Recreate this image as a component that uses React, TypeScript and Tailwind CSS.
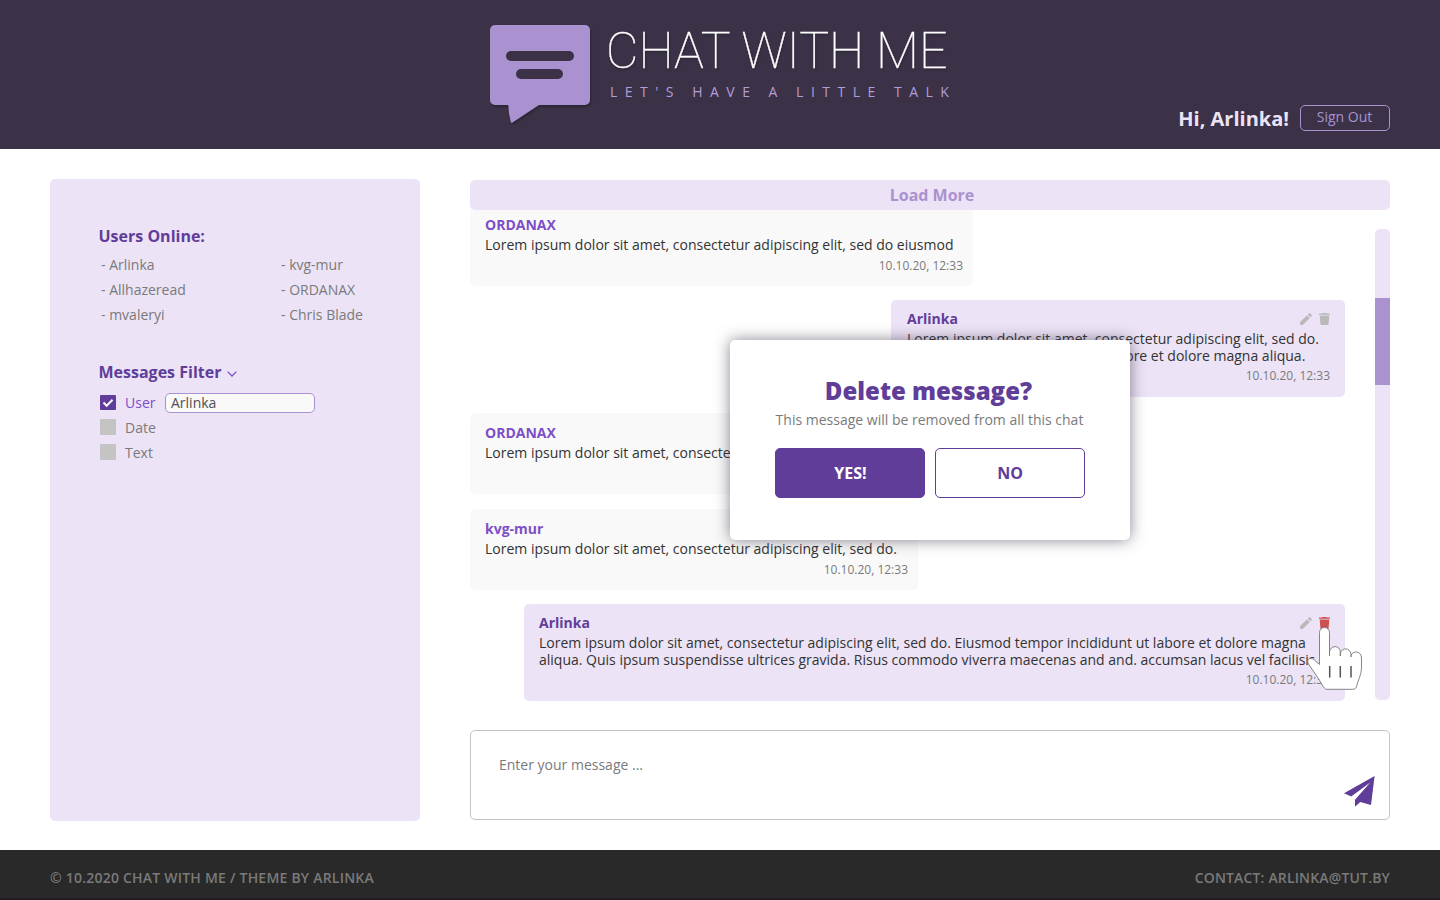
import React from "react";

function PencilIcon() {
  return (
    <svg className="h-3 w-3" viewBox="0 0 12 12" fill="#b9b9b9">
      <path d="M0 9.300V12h2.700L9.800 4.900 7.100 2.200zM11.700 2.900a.9.9 0 0 0 0-1L10.200.3a.9.9 0 0 0-1 0L7.800 1.600l2.600 2.600z" />
    </svg>
  );
}

function TrashIcon({ active }: { active?: boolean }) {
  return (
    <svg className="h-3 w-[11px]" viewBox="0 0 11 12" fill={active ? "#cb5050" : "#b9b9b9"}>
      <path d="M0 .6h3L3.5 0h4l.5.6h3v1.2H0zM.7 2.6h9.6L9.6 11a1 1 0 0 1-1 1H2.400a1 1 0 0 1-1-1z" />
    </svg>
  );
}

type MessageProps = {
  author: string;
  lines: string[];
  time?: string;
  own?: boolean;
  active?: boolean;
  className: string;
};

function Message({ author, lines, time, own, active, className }: MessageProps) {
  return (
    <article
      className={`flex shrink-0 flex-col rounded-[5px] ${
        own ? "self-end bg-[#ece3f6] pt-[10px] pr-[15px]" : "bg-[#f9f9f9] pt-[11px] pr-[10px]"
      } ${className}`}
    >
      <div className="flex h-5 items-start justify-between">
        <h3 className={`text-[14px] leading-[17px] font-bold ${own ? "text-[#613d9a]" : "text-[#7d4fc9]"}`}>
          {author}
        </h3>
        {own && (
          <div className="flex gap-[7px] pt-[3px]">
            <PencilIcon />
            <TrashIcon active={active} />
          </div>
        )}
      </div>
      <div className="text-[14px] leading-[17px] whitespace-nowrap text-[#333]">
        {lines.map((l) => (
          <p key={l}>{l}</p>
        ))}
      </div>
      {time && (
        <time className={`self-end text-[12px] leading-[17px] text-[#7a7a7a] ${own ? "mt-[3px]" : "mt-[4px]"}`}>
          {time}
        </time>
      )}
    </article>
  );
}

const users = ["Arlinka", "kvg-mur", "Allhazeread", "ORDANAX", "mvaleryi", "Chris Blade"];

export default function App() {
  return (
    <div className="relative flex h-[900px] w-[1440px] flex-col overflow-hidden bg-white font-['Open_Sans',sans-serif]">
      <header className="flex h-[149px] shrink-0 bg-[#3b3247] pr-[50px] pl-[490px]">
        <svg
          className="mt-[25px] h-[102px] w-[104px] shrink-0 overflow-visible drop-shadow-[1px_2px_1px_rgba(0,0,0,0.25)]"
          viewBox="0 0 104 102"
        >
          <path
            d="M5 0h90a5 5 0 0 1 5 5v70a5 5 0 0 1-5 5H49L22.500 97.600q-1.500 .8-1.800-.8Q18.500 88 18.300 80H5a5 5 0 0 1-5-5V5a5 5 0 0 1 5-5z"
            fill="#aa91d0"
          />
          <rect x="16" y="26" width="68" height="10" rx="5" fill="#3b3247" />
          <rect x="26" y="44" width="47" height="10" rx="5" fill="#3b3247" />
        </svg>
        <div className="flex w-[400px] shrink-0 flex-col pt-[21px] pl-[12px] whitespace-nowrap">
          <h1 className="font-['Roboto',sans-serif] text-[50px] leading-[60px] font-thin text-white [text-shadow:1px_2px_2px_rgba(0,0,0,0.25)] [-webkit-text-stroke:0.35px_white]">
            CHAT WITH ME
          </h1>
          <p className="-mt-px pl-[4px] text-[14px] leading-[24px] tracking-[7.500px] text-[#b49cd8]">
            LET'S HAVE A LITTLE TALK
          </p>
        </div>
        <div className="flex flex-1 items-start justify-end gap-[11px] pt-[105px]">
          <span className="text-[20px] leading-[27px] font-bold whitespace-nowrap text-[#ece3f6]">Hi, Arlinka!</span>
          <button className="flex h-[26px] w-[90px] shrink-0 justify-center rounded-[5px] border border-[#aa91d0] pr-px text-[14px] leading-[22px] text-[#aa91d0]">
            Sign Out
          </button>
        </div>
      </header>

      <main className="flex h-[701px] shrink-0 gap-[50px] px-[50px]">
        <aside className="mt-[30px] h-[642px] w-[370px] shrink-0 rounded-[5px] bg-[#ece3f6] pt-[46px] pl-[48px] text-[14px] text-[#7a7a7a]">
          <h2 className="pl-[0.5px] text-[16px] leading-[22px] font-bold text-[#613d9a]">Users Online:</h2>
          <ul className="mt-[5px] grid grid-cols-[180px_1fr] pl-[3px] leading-[25px]">
            {users.map((u) => (
              <li key={u}>- {u}</li>
            ))}
          </ul>
          <h2 className="mt-[34px] flex items-center gap-[6px] pl-[0.5px] text-[16px] leading-[22px] font-bold text-[#613d9a]">
            Messages Filter
            <svg className="mt-[3px] h-[6px] w-[10px]" viewBox="0 0 10 6" fill="none" stroke="#7d4fc9" strokeWidth="1.3">
              <path d="M.6 .6 5 5 9.400 .6" />
            </svg>
          </h2>
          <div className="mt-[7px] pl-[2px] leading-[25px]">
            <div className="flex h-[25px] items-center">
              <svg className="h-[15px] w-4" viewBox="0 0 16 15">
                <rect width="16" height="15" rx="1" fill="#613d9a" />
                <path d="M3.500 7.500 6.700 10.700 12.500 4.700" fill="none" stroke="#f9f9f9" strokeWidth="2" />
              </svg>
              <span className="ml-[9px] w-[40px] text-[#7d4fc9]">User</span>
              <div className="h-5 w-[150px] rounded-[5px] border border-[#aa91d0] bg-[#f9f9f9] pl-[5px] leading-[18px] text-[#4f4f4f]">
                Arlinka
              </div>
            </div>
            {["Date", "Text"].map((f) => (
              <div key={f} className="flex h-[25px] items-center gap-[9px]">
                <span className="-mt-px h-4 w-4 rounded-[1px] bg-[#c4c4c4]" />
                {f}
              </div>
            ))}
          </div>
        </aside>

        <section className="flex w-[920px] flex-col pt-[31px]">
          <button className="h-[30px] shrink-0 rounded-[5px] bg-[#ece3f6] pl-[4px] text-[16px] leading-[30px] font-bold text-[#aa91d0]">
            Load More
          </button>
          <div className="flex h-[491px] shrink-0 gap-[30px]">
            <div className="flex w-[875px] flex-col overflow-hidden">
              <Message
                author="ORDANAX"
                lines={["Lorem ipsum dolor sit amet, consectetur adipiscing elit, sed do eiusmod"]}
                time="10.10.20, 12:33"
                className="-mt-[5px] h-[81px] w-[503px] pl-[15px]"
              />
              <Message
                own
                author="Arlinka"
                lines={[
                  "Lorem ipsum dolor sit amet, consectetur adipiscing elit, sed do.",
                  "Eiusmod tempor incididunt ut labore et dolore magna aliqua.",
                ]}
                time="10.10.20, 12:33"
                className="mt-[14px] h-[97px] w-[454px] pl-[16px]"
              />
              <Message
                author="ORDANAX"
                lines={["Lorem ipsum dolor sit amet, consectetur"]}
                className="mt-[16px] h-[81px] w-[380px] pl-[15px]"
              />
              <Message
                author="kvg-mur"
                lines={["Lorem ipsum dolor sit amet, consectetur adipiscing elit, sed do."]}
                time="10.10.20, 12:33"
                className="mt-[15px] h-[81px] w-[448px] pl-[15px]"
              />
              <Message
                own
                active
                author="Arlinka"
                lines={[
                  "Lorem ipsum dolor sit amet, consectetur adipiscing elit, sed do. Eiusmod tempor incididunt ut labore et dolore magna",
                  "aliqua. Quis ipsum suspendisse ultrices gravida. Risus commodo viverra maecenas and and. accumsan lacus vel facilisis.",
                ]}
                time="10.10.20, 12:33"
                className="mt-[14px] h-[97px] w-[821px] pl-[15px]"
              />
            </div>
            <div className="mt-[19px] h-[471px] w-[15px] rounded-[5px] bg-[#ece3f6] pt-[69px]">
              <div className="h-[87px] bg-[#aa91d0]" />
            </div>
          </div>
          <div className="mt-[29px] flex h-[90px] shrink-0 justify-between rounded-[5px] border border-[#c4c4c4] pr-[14px] pl-[28px]">
            <p className="mt-[22px] text-[14px] leading-[24px] text-[#7a7a7a]">Enter your message ...</p>
            <svg className="mt-[45px] h-[31px] w-[31px]" viewBox="0 0 31 31" fill="#613d9a">
              <path d="M30.600 0 0 17.200 7.200 20.600 26.200 6.400 11 23.800V30.700L16.300 26 27 29z" />
            </svg>
          </div>
        </section>
      </main>

      <footer className="flex h-[50px] shrink-0 justify-between border-b-2 border-[#241c22] bg-[#292929] px-[50px] pt-[16px] text-[14px] leading-[24px] font-semibold text-[#7a7a7a]">
        <span className="tracking-[0.22px]">© 10.2020 CHAT WITH ME / THEME BY ARLINKA</span>
        <span className="tracking-[0.16px]">CONTACT: ARLINKA@TUT.BY</span>
      </footer>

      <div
        role="dialog"
        className="absolute top-[340px] left-[730px] flex h-[200px] w-[400px] flex-col items-center rounded-[5px] bg-white pt-[34px] shadow-[0_0_15px_rgba(59,50,71,0.6)]"
      >
        <h2 className="pr-[3px] text-[24px] leading-[34px] font-extrabold text-[#613d9a]">Delete message?</h2>
        <p className="mt-[2px] pr-px text-[14px] leading-[20px] text-[#7a7a7a]">
          This message will be removed from all this chat
        </p>
        <div className="mt-[18px] flex gap-[10px] text-[16px] leading-[48px] font-bold">
          <button className="h-[50px] w-[150px] rounded-[5px] border border-[#613d9a] bg-[#613d9a] pl-px text-white">
            YES!
          </button>
          <button className="h-[50px] w-[150px] rounded-[5px] border border-[#613d9a] text-[#613d9a]">NO</button>
        </div>
      </div>

      <svg className="absolute top-[626px] left-[1306px] h-[65px] w-[57px]" viewBox="0 0 57 65" fill="none">
        <path
          d="M13.500 38.500V6.500a5 5 0 0 1 10 0V30V25.500C25 19 33.500 19 34.300 25.500V30V27.500C36 21 44 21.500 45 28V31V29.500C47 24 55.500 25 55.500 32V41C55.500 49 52 54 51 59Q50.500 63.300 46.500 63.300H20.500C17.500 63 15 56 11 50.500L2.500 38C-.5 32.500 5.500 31 8.500 34z"
          fill="#fff"
          stroke="#777"
          strokeWidth=".9"
        />
        <path d="M23.700 40V51.500M34.300 40V51.500M45 40V51.500" stroke="#555" strokeWidth="1.500" />
      </svg>
    </div>
  );
}
